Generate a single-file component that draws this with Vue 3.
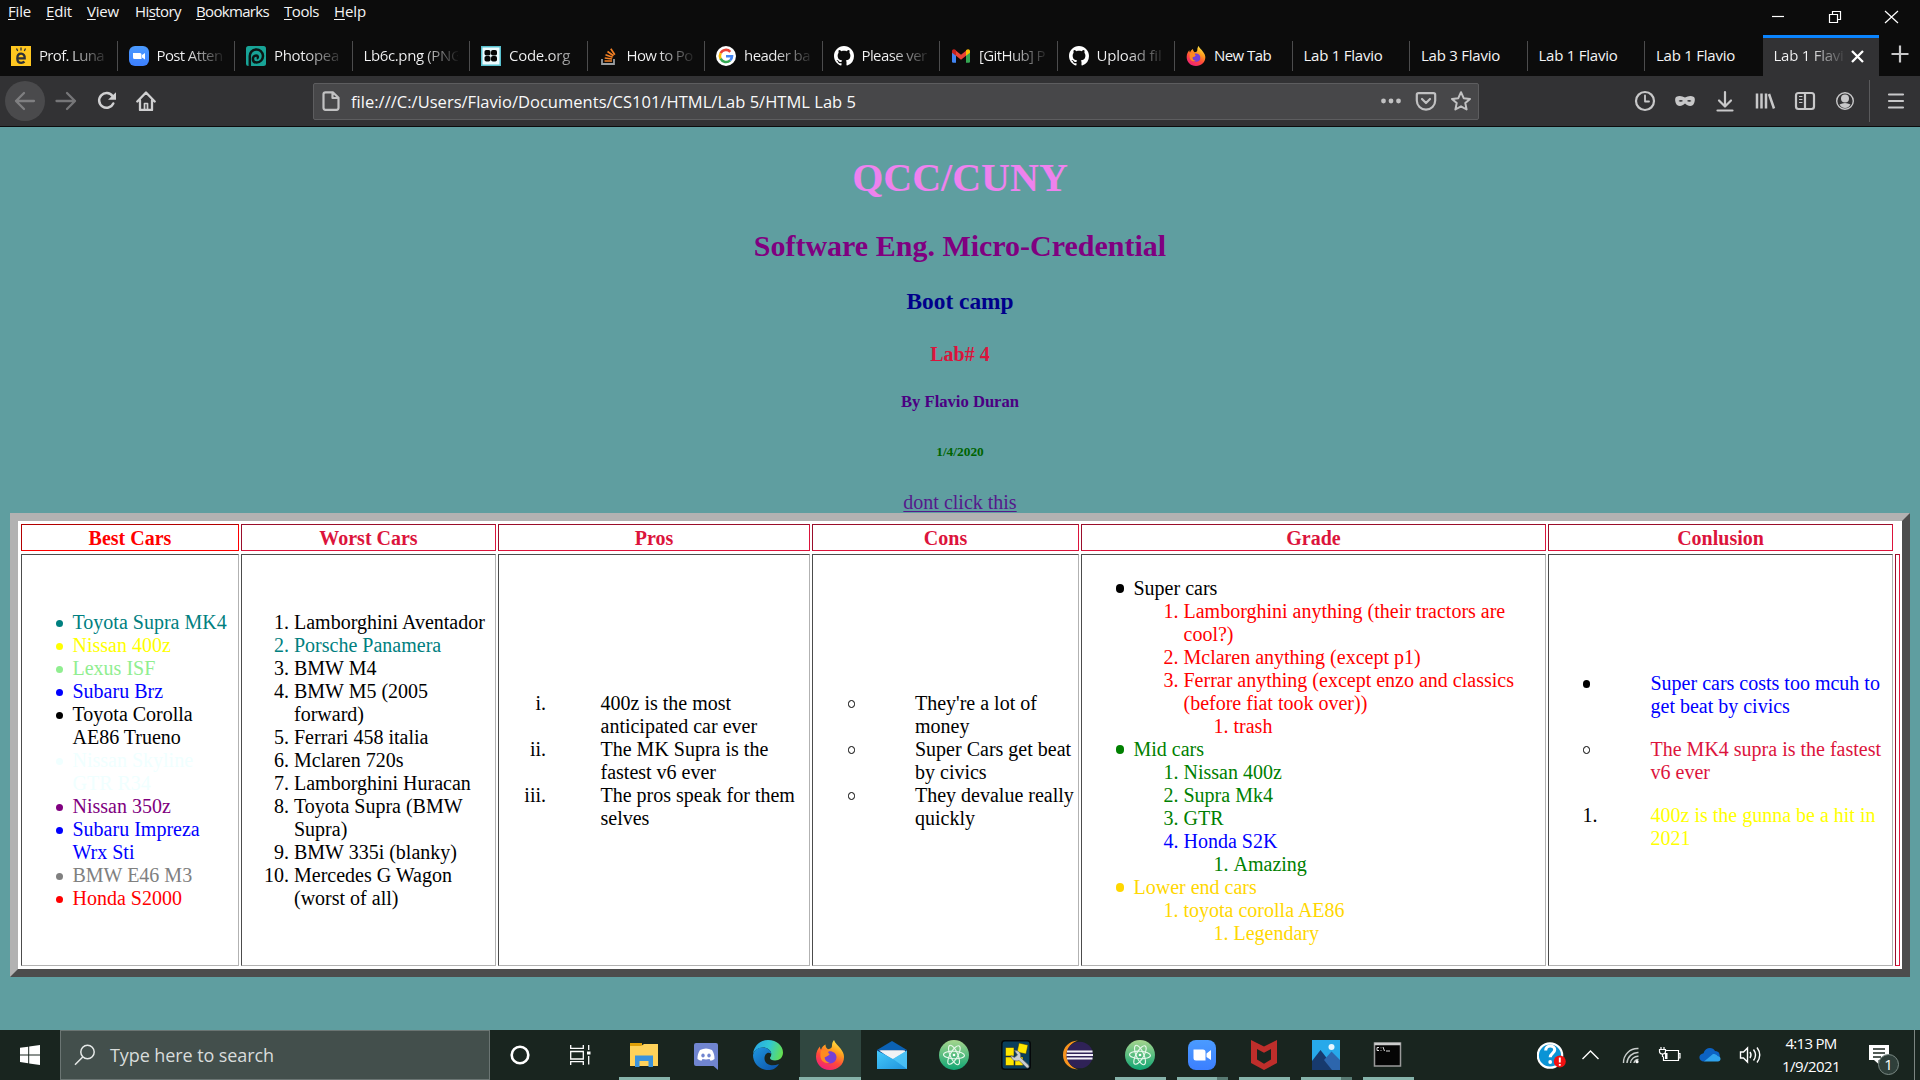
<script setup>
// Tightens or widens the tracking so a label takes exactly the given width.
const vFit = {
  mounted(el, { value }) {
    if (!value) return
    const natural = el.getBoundingClientRect().width
    const count = el.textContent.trim().length
    el.style.letterSpacing = (value - natural) / count + 'px'
  }
}

const menus = [
  ['F', 'ile', 23, '', 38], ['E', 'dit', 26, '', 41], ['V', 'iew', 32, '', 48],
  ['s', 'tory', 46, 'Hi', 61], ['B', 'ookmarks', 73, '', 88], ['T', 'ools', 35, '', 50], ['H', 'elp', 32, '', 40]
]

const tabs = [
  { icon: 'engrade', text: 'Prof. Luna', w: 65 },
  { icon: 'zoom', text: 'Post Atten', w: 66 },
  { icon: 'photopea', text: 'Photopea', w: 65 },
  { text: 'Lb6c.png (PNG', w: 98, wide: true },
  { icon: 'code', text: 'Code.org', w: 61, soft: true },
  { icon: 'stack', text: 'How to Po', w: 66 },
  { icon: 'google', text: 'header ba', w: 66 },
  { icon: 'github', text: 'Please ver', w: 65 },
  { icon: 'gmail', text: '[GitHub] P', w: 66 },
  { icon: 'github', text: 'Upload fil', w: 65 },
  { icon: 'firefox', text: 'New Tab', w: 57, whole: true },
  { text: 'Lab 1 Flavio', w: 79, whole: true },
  { text: 'Lab 3 Flavio', w: 79, whole: true },
  { text: 'Lab 1 Flavio', w: 79, whole: true },
  { text: 'Lab 1 Flavio', w: 79, whole: true },
  { text: 'Lab 1 Flavi', w: 70, active: true }
]

const columns = [
  {
    title: 'Best Cars', head: 'red', kind: 'best', rows: [
      ['disc', 'Toyota Supra MK4', 'teal'],
      ['disc', 'Nissan 400z', 'yellow'],
      ['disc', 'Lexus ISF', 'lightgreen'],
      ['disc', 'Subaru Brz', 'blue'],
      ['disc', 'Toyota Corolla\nAE86 Trueno', 'black'],
      ['disc', 'Nissan Skyline\nGTR R34', 'azure'],
      ['disc', 'Nissan 350z', 'purple'],
      ['disc', 'Subaru Impreza\nWrx Sti', 'blue'],
      ['disc', 'BMW E46 M3', 'gray'],
      ['disc', 'Honda S2000', 'red']
    ]
  },
  {
    title: 'Worst Cars', kind: 'worst', rows: [
      ['1.', 'Lamborghini Aventador'],
      ['2.', 'Porsche Panamera', 'teal'],
      ['3.', 'BMW M4'],
      ['4.', 'BMW M5 (2005\nforward)'],
      ['5.', 'Ferrari 458 italia'],
      ['6.', 'Mclaren 720s'],
      ['7.', 'Lamborghini Huracan'],
      ['8.', 'Toyota Supra (BMW\nSupra)'],
      ['9.', 'BMW 335i (blanky)'],
      ['10.', 'Mercedes G Wagon\n(worst of all)']
    ]
  },
  {
    title: 'Pros', kind: 'pros', rows: [
      ['i.', '400z is the most\nanticipated car ever'],
      ['ii.', 'The MK Supra is the\nfastest v6 ever'],
      ['iii.', 'The pros speak for them\nselves']
    ]
  },
  {
    title: 'Cons', kind: 'cons', rows: [
      ['circle', "They're a lot of\nmoney"],
      ['circle', 'Super Cars get beat\nby civics'],
      ['circle', 'They devalue really\nquickly']
    ]
  },
  {
    title: 'Grade', kind: 'grade', rows: [
      ['disc', 'Super cars', 'black', 0],
      ['1.', 'Lamborghini anything (their tractors are\ncool?)', 'red', 1],
      ['2.', 'Mclaren anything (except p1)', 'red', 1],
      ['3.', 'Ferrar anything (except enzo and classics\n(before fiat took over))', 'red', 1],
      ['1.', 'trash', 'red', 2],
      ['disc', 'Mid cars', 'green', 0],
      ['1.', 'Nissan 400z', 'green', 1],
      ['2.', 'Supra Mk4', 'green', 1],
      ['3.', 'GTR', 'green', 1],
      ['4.', 'Honda S2K', 'blue', 1],
      ['1.', 'Amazing', 'green', 2],
      ['disc', 'Lower end cars', 'gold', 0],
      ['1.', 'toyota corolla AE86', 'gold', 1],
      ['1.', 'Legendary', 'gold', 2]
    ]
  },
  {
    title: 'Conlusion', kind: 'end', rows: [
      ['disc', 'Super cars costs too mcuh to\nget beat by civics', 'blue'],
      ['circle', 'The MK4 supra is the fastest\nv6 ever', 'crimson'],
      ['1.', '400z is the gunna be a hit in\n2021', 'yellow']
    ]
  }
]

const apps = [
  { icon: 'explorer', open: true }, { icon: 'discord' }, { icon: 'edge' },
  { icon: 'firefox', open: true, active: true }, { icon: 'mail' }, { icon: 'atom' },
  { icon: 'tool' }, { icon: 'eclipse' }, { icon: 'atom', open: true },
  { icon: 'zoomapp', open: true, stacked: true }, { icon: 'mcafee', open: true },
  { icon: 'photos', open: true, stacked: true }, { icon: 'cmd', open: true }
]
</script>

<template>
  <div class="screen">
    <svg class="defs" width="0" height="0">
      <defs>
        <linearGradient id="ffBody" x1=".8" y1="0" x2=".3" y2="1">
          <stop offset="0" stop-color="#fff04a" /><stop offset=".35" stop-color="#ffa01f" />
          <stop offset=".65" stop-color="#ff4a3a" /><stop offset="1" stop-color="#f0207a" />
        </linearGradient>
        <linearGradient id="edgeTop" x1="0" y1=".4" x2="1" y2=".6">
          <stop offset="0" stop-color="#27a7e5" /><stop offset=".5" stop-color="#31c8d2" /><stop offset="1" stop-color="#66e04d" />
        </linearGradient>
        <linearGradient id="edgeLow" x1="0" y1="0" x2="1" y2="1">
          <stop offset="0" stop-color="#1f96e0" /><stop offset="1" stop-color="#0b4fa5" />
        </linearGradient>
        <linearGradient id="atomBg" x1="0" y1="0" x2="0" y2="1">
          <stop offset="0" stop-color="#a6d68e" /><stop offset="1" stop-color="#0fa573" />
        </linearGradient>
        <linearGradient id="mailBg" x1="0" y1="0" x2="1" y2="1">
          <stop offset="0" stop-color="#45cafb" /><stop offset="1" stop-color="#2093dc" />
        </linearGradient>
        <linearGradient id="zoomBg" x1="0" y1="0" x2="0" y2="1">
          <stop offset="0" stop-color="#4b9bff" /><stop offset="1" stop-color="#3c7fff" />
        </linearGradient>

        <symbol id="i-engrade" viewBox="0 0 20 20">
          <rect width="20" height="20" fill="#ffc720" />
          <path d="M6.500 12.300h7.200c.2-2.800-1.200-4.600-3.600-4.600S6.300 9.600 6.300 12.400s1.500 4.400 4 4.400c1.300 0 2.400-.4 3.200-1.100" fill="none" stroke="#2d3038" stroke-width="2.300" />
          <path d="M5.500 2.500l1.200 2.500M10 1.500v3M14.500 2.500l-1.200 2.500" stroke="#2d3038" stroke-width="1.300" />
        </symbol>
        <symbol id="i-zoom" viewBox="0 0 20 20">
          <rect width="20" height="20" rx="6" fill="url(#zoomBg)" />
          <path d="M4 7h7q1.500 0 1.500 1.500V13H5.500Q4 13 4 11.500zM13 9l3-2v6.500l-3-2z" fill="#fff" />
        </symbol>
        <symbol id="i-photopea" viewBox="0 0 20 20">
          <rect width="20" height="20" rx="2.500" fill="#18a497" />
          <path d="M3.800 20V10.500a6.600 6.600 0 1 1 6.800 6.100c-5 0-4.700-7.200-.4-7.200 2 0 2.200 2.700.5 2.900" fill="none" stroke="#0b1514" stroke-width="2.500" />
        </symbol>
        <symbol id="i-code" viewBox="0 0 20 20">
          <rect width="20" height="20" fill="#58c1cf" /><rect x="1.500" y="1.500" width="17" height="17" fill="#eefcff" />
          <g fill="#050505"><rect x="3.500" y="4" width="6" height="5.500" rx="1.800" /><rect x="10" y="4" width="6" height="5.500" rx="1.800" /><rect x="3.500" y="10" width="6" height="5.500" rx="1.800" /><rect x="10" y="10" width="6" height="5.500" rx="1.800" /></g>
        </symbol>
        <symbol id="i-stack" viewBox="0 0 20 20">
          <path d="M3 13v5h12v-5" fill="none" stroke="#9a9da0" stroke-width="1.800" />
          <path d="M5.500 15h7.500M5.700 12l7.400 1M6.500 8.700l7.100 2.500M8.500 5.500l6 4.200M11.800 2.800l4 6" fill="none" stroke="#f48024" stroke-width="1.700" />
        </symbol>
        <symbol id="i-google" viewBox="0 0 20 20">
          <circle cx="10" cy="10" r="10" fill="#fff" />
          <g fill="none" stroke-width="2.600">
            <path d="M4.600 7.200A6 6 0 0 1 14.300 5.800" stroke="#ea4335" />
            <path d="M4.600 12.800a6 6 0 0 1 0-5.600" stroke="#fbbc05" />
            <path d="M14.200 14.300A6 6 0 0 1 4.600 12.700" stroke="#34a853" />
            <path d="M10 10.200h6a6 6 0 0 1-1.900 4.200" stroke="#4285f4" />
          </g>
        </symbol>
        <symbol id="i-github" viewBox="0 0 16 16">
          <path fill="#fff" d="M8 0C3.580 0 0 3.580 0 8c0 3.540 2.290 6.530 5.470 7.590.4.070.55-.17.55-.38 0-.19-.01-.82-.01-1.490-2.010.37-2.530-.49-2.690-.94-.09-.23-.48-.94-.82-1.130-.28-.15-.68-.52-.01-.53.63-.01 1.080.58 1.230.82.72 1.210 1.870.87 2.330.66.070-.52.28-.87.51-1.070-1.780-.2-3.640-.89-3.640-3.950 0-.87.31-1.590.82-2.150-.08-.2-.36-1.020.08-2.120 0 0 .67-.21 2.200.82.64-.18 1.320-.27 2-.27s1.360.09 2 .27c1.530-1.040 2.200-.82 2.200-.82.44 1.100.16 1.920.08 2.120.51.56.82 1.270.82 2.150 0 3.070-1.870 3.750-3.650 3.950.29.25.54.73.54 1.480 0 1.070-.01 1.930-.01 2.200 0 .21.15.46.55.38A8.010 8.010 0 0 0 16 8c0-4.420-3.580-8-8-8z" />
        </symbol>
        <symbol id="i-gmail" viewBox="0 0 20 20">
          <path d="M1 5v10.500q0 1.200 1.200 1.200H5V8.500z" fill="#4285f4" /><path d="M19 5v10.500q0 1.200-1.200 1.200H15V8.500z" fill="#34a853" />
          <path d="M5 4.800l5 4 5-4v5l-5 4-5-4z" fill="#ea4335" /><path d="M1 5.200C1 3 3.300 2.500 5 4.200v5.500L1 6.700z" fill="#c5221f" /><path d="M19 5.200c0-2.200-2.300-2.700-4-1v5.500l4-3z" fill="#fbbc04" />
        </symbol>
        <symbol id="i-firefox" viewBox="0 0 30 30">
          <path d="M15 30C6.500 30 1 23.700 1 16.500 1 12 3 8.500 5 6.500c0 1.500.3 2.500 1 3.200C7 7 9 5 10.500 4.500c0 2 .7 3.500 2.500 4.700C16 9 17 7.500 17 5.500c0-2.200.7-4 2-5.500 1 3.500 4 5 6.500 8.500 2.300 3 3.500 5.500 3.500 8.500C29 24.500 23 30 15 30z" fill="url(#ffBody)" />
          <path d="M13.500 11.500c3.500-.8 8 1.500 8 6a6.300 6.300 0 0 1-6.500 6c-4 0-7-3-6.700-7 2 .8 4.500-.3 6.200-2.300-1.200-.6-1.700-1.400-1-2.700z" fill="#7540d8" />
          <path d="M6 10.500c2.500-.8 5-.2 7.500 1-1 1-.5 2 1.200 2.500-1.500 2-3.500 2.500-5 3.300 0 3 2.300 5 5.300 5-4.500 2-9-1-9.500-5.500-.2-2 0-4.500.5-6.300z" fill="#ff8b20" />
        </symbol>

        <symbol id="i-explorer" viewBox="0 0 30 30">
          <path d="M1 3h12v5H1z" fill="#e0a007" /><path d="M1 6h11l3-2h14v22H1z" fill="#ffd25a" />
          <path d="M6 27V15.500h18V27h-4.500v-6h-9v6z" fill="#3b93dc" />
        </symbol>
        <symbol id="i-discord" viewBox="0 0 30 30">
          <path d="M5 3h20q2 0 2 2v25l-4.500-4H5q-2 0-2-2V5q0-2 2-2z" fill="#7085d0" />
          <path d="M9 10c4-2 8-2 12 0 2 3 2.600 6 2.500 9-1.300 1-2.700 1.500-4 1.700l-1-1.700c-2.300.6-4.700.6-7 0l-1 1.700c-1.300-.2-2.700-.7-4-1.700C6.400 16 7 13 9 10z" fill="#fff" />
          <ellipse cx="12" cy="15.500" rx="1.700" ry="1.900" fill="#7085d0" /><ellipse cx="18" cy="15.500" rx="1.700" ry="1.900" fill="#7085d0" />
        </symbol>
        <symbol id="i-edge" viewBox="0 0 30 30">
          <path d="M0 14C1 5 8 0 15 0c9 0 15 6 15 12.500 0 5-3.500 8-8 8-3 0-5-1-5-2.500 0-1 1.300-1.300 1.300-4C18.300 10 14 7.500 10 7.500 5 7.500 1.500 10.500 0 14z" fill="url(#edgeTop)" />
          <path d="M0 15c1-4.500 4.500-7.500 10-7.500 4.500 0 8.300 3 8.300 6.500-3-3-6.800-.5-6.800 4.500 0 6 7 8.500 14.500 5.500C23 29 19 30 15.500 30 6 30 0 23 0 15z" fill="url(#edgeLow)" />
        </symbol>
        <symbol id="i-mail" viewBox="0 0 30 30">
          <path d="M0 10L15 1l15 9v6H0z" fill="#0b62b5" /><path d="M0 10h30v3H0z" fill="#0a3f80" />
          <path d="M2 10.500h26v3L16 20z" fill="#f1f3f5" />
          <path d="M0 10.500L16 19l14-8.500V29H0z" fill="url(#mailBg)" /><path d="M16 19l14-8.500V29z" fill="#5bd0fc" opacity=".65" />
          <path d="M3 10.500h24L16 18z" fill="#f1f3f5" />
        </symbol>
        <symbol id="i-atom" viewBox="0 0 30 30">
          <circle cx="15" cy="15" r="15" fill="url(#atomBg)" />
          <g fill="none" stroke="#e8f8ec" stroke-width="1.100"><ellipse cx="15" cy="15" rx="3.800" ry="10.500" transform="rotate(-24 15 15)" /><ellipse cx="15" cy="15" rx="3.800" ry="10.500" transform="rotate(30 15 15)" /><ellipse cx="15" cy="15" rx="3.800" ry="10.500" transform="rotate(93 15 15)" /></g>
          <circle cx="15" cy="15" r="1.300" fill="#fff" />
        </symbol>
        <symbol id="i-tool" viewBox="0 0 30 30">
          <rect x=".8" y=".8" width="28.400" height="28.400" rx="3" fill="#0a3f5c" stroke="#05080a" stroke-width="1.600" />
          <path d="M4.500 7.500h8.500v8.500H4.500zM4.500 17h8.500v8.500H4.500zM14 17h8v8.500h-8zM18 3l9 2-2 9-9-2z" fill="#ffe600" stroke="#222" stroke-width=".5" />
          <path d="M13.500 10.500c4-.5 7 3 6 7l8 7.500q1.500 3-1.500 3l-8-7.500c-4 1.500-8-1-8-5l3.500 2 3-2.500z" fill="#c9cdd0" stroke="#666" stroke-width=".7" />
        </symbol>
        <symbol id="i-eclipse" viewBox="0 0 30 30">
          <path d="M15 .5C6 1 0 7 0 15s6 14 15 14.500C8 27 4 22 4 15S8 3 15 .5z" fill="#f7941e" />
          <circle cx="16.700" cy="15" r="13.300" fill="#2f2257" />
          <path d="M4 11.500h25.500M3.500 15h26.500M4 18.500h25.500" stroke="#f3f1f8" stroke-width="1.800" />
        </symbol>
        <symbol id="i-zoomapp" viewBox="0 0 30 30">
          <rect x="1" width="28" height="30" rx="8" fill="url(#zoomBg)" />
          <path d="M6.500 9.500H16q2.500 0 2.500 2.500v8.500H9q-2.500 0-2.500-2.500zM19.500 13.500l4.500-3.500v10l-4.500-3z" fill="#fff" />
        </symbol>
        <symbol id="i-mcafee" viewBox="0 0 30 30">
          <path d="M2 0l13 6.500L28 0v23L15 30 2 23zM8 9v10.500l7 4.200 7-4.200V9l-7 3.800z" fill="#bf2e2b" fill-rule="evenodd" />
        </symbol>
        <symbol id="i-photos" viewBox="0 0 30 30">
          <rect x="1" width="28" height="30" fill="#27a9ea" /><path d="M1 21L9.500 10 25 30H1z" fill="#173a6e" />
          <path d="M13 20l7.500-8.500L29 20v10H21z" fill="#2d66ad" /><circle cx="20.500" cy="7" r="3" fill="#e8f7ff" />
        </symbol>
        <symbol id="i-cmd" viewBox="0 0 30 30">
          <rect x="1.500" y="3" width="26" height="23" fill="#050505" stroke="#9a9a9a" stroke-width="1.500" />
          <path d="M1.500 4h26" stroke="#ccc" stroke-width="2.500" /><path d="M4 7.500h2M4 7.500v3h2M8 7.500v.8M8 10v.8M10 7l1.500 4M13 11h4" stroke="#ddd" stroke-width="1" fill="none" />
        </symbol>
      </defs>
    </svg>

    <header class="chrome">
      <div class="titlebar">
        <nav class="menus">
          <div v-for="m in menus" :key="m[1]" class="menu" :style="{ width: m[4] + 'px' }">
            <span v-fit="m[2]">{{ m[3] }}<u>{{ m[0] }}</u>{{ m[1] }}</span>
          </div>
        </nav>
        <svg class="wincontrols" width="148" height="34" fill="none" stroke="#fff" stroke-width="1.200">
          <path d="M0 16.500h12" /><path d="M57.500 14.500h8v8h-8zM60.500 14v-2.500h8v8H66" /><path d="M113 11l13 12M126 11l-13 12" />
        </svg>
      </div>
      <div class="tabstrip">
        <div v-for="(t, i) in tabs" :key="i" class="tab" :class="{ active: t.active, last: i === 14 }">
          <svg v-if="t.icon" class="fav" width="20" height="20"><use :href="'#i-' + t.icon" /></svg>
          <div class="label" :class="{ whole: t.whole, wide: t.wide, soft: t.soft }"><span v-fit="t.w">{{ t.text }}</span></div>
          <svg v-if="t.active" class="x" width="13" height="13" stroke="#fff" stroke-width="2.300"><path d="M1 1l11 11M12 1L1 12" /></svg>
        </div>
        <svg class="plus" width="18" height="18" stroke="#c8c8c9" stroke-width="2.200"><path d="M9 .5v17M.5 9h17" /></svg>
      </div>
      <div class="toolbar">
        <div class="nav">
          <div class="back"><svg width="22" height="20" fill="none" stroke="#7f7f81" stroke-width="2.300" stroke-linecap="round" stroke-linejoin="round"><path d="M20 10H2M10 2l-8 8 8 8" /></svg></div>
          <svg class="fwd" width="22" height="20" fill="none" stroke="#767678" stroke-width="2.300" stroke-linecap="round" stroke-linejoin="round"><path d="M1.500 10H20M12 2l8 8-8 8" /></svg>
          <svg class="reload" width="20" height="20" viewBox="0 0 20 20"><path d="M16.300 12.500A7.400 7.400 0 1 1 15.500 5" fill="none" stroke="#d0d0d1" stroke-width="2.500" stroke-linecap="round" /><path d="M19 1.200V8.700h-8z" fill="#d0d0d1" /></svg>
          <svg class="home" width="20" height="20" viewBox="0 0 20 20" fill="none" stroke="#d0d0d1" stroke-width="2.300" stroke-linejoin="round" stroke-linecap="round"><path d="M1.300 10.500L10 1.500l8.700 9M4 9.500V19h12V9.500" /><path d="M8.500 18.500v-6h3v6" stroke-width="1.700" /></svg>
        </div>
        <div class="urlbar">
          <svg width="18" height="20" viewBox="0 0 18 20" fill="none" stroke="#c1c1c2" stroke-width="2.200" stroke-linejoin="round"><path d="M3.500 1.300h7.300l5.700 5.500v10q0 2-2 2h-11q-2 0-2-2V3.300q0-2 2-2zM10.500 1.500V7h5.700" /></svg>
          <div class="url"><span v-fit="505">file:///C:/Users/Flavio/Documents/CS101/HTML/Lab 5/HTML Lab 5</span></div>
          <svg width="90" height="20" viewBox="0 0 90 20" fill="none" stroke="#c1c1c2" stroke-width="2.200" stroke-linejoin="round" stroke-linecap="round">
            <g fill="#c1c1c2" stroke="none"><circle cx="2.500" cy="10" r="2.400" /><circle cx="10" cy="10" r="2.400" /><circle cx="17.500" cy="10" r="2.400" /></g>
            <path d="M37.500 2.200h15q1.700 0 1.700 1.700v5.600a9.200 9.200 0 0 1-18.400 0V3.900q0-1.700 1.700-1.700zM41 8l4 4 4-4" />
            <path d="M80 1.200l2.700 6 6.300.7-4.700 4.200 1.300 6.400L80 15.300 74.400 18.500l1.300-6.400L71 7.900l6.300-.7z" stroke-width="2" />
          </svg>
        </div>
        <svg class="tools" width="281" height="42" viewBox="0 0 281 42" fill="none" stroke="#c8c8c9" stroke-width="2.200" stroke-linecap="round" stroke-linejoin="round">
          <circle cx="11" cy="21" r="9" /><path d="M11 15.500V21.500h4" stroke-width="1.800" />
          <path d="M42 17c3-1.500 6-1 9 .5 3-1.500 6-2 9-.5 1.400 1.500 1 5.500-1 8-2.500 1.800-5.500 1-8-1.500-2.500 2.500-5.500 3.300-8 1.500-2-2.500-2.400-6.500-1-8z" fill="#c8c8c9" stroke="none" /><path d="M44.500 21c1.500-1.500 3.500-1.400 4.500 0-1.200 1-3.200 1-4.500 0zM53 21c1-1.400 3-1.500 4.500 0-1.300 1-3.300 1-4.500 0z" fill="#323234" stroke="none" />
          <path d="M91 12v14M85 20.500l6 6 6-6M83.500 30.500h15" />
          <path d="M123 13.500v15M127.500 13.500v15M132 13.500v15M135 14l5 14.500" stroke-linecap="butt" stroke-width="2.500" />
          <rect x="162" y="13" width="18" height="16" rx="2.500" /><path d="M171 13v16" /><path d="M165.500 16.500h2.500M165.500 19.500h2.500M165.500 22.500h2.500" stroke-width="1.200" />
          <circle cx="211" cy="21" r="8.300" stroke-width="1.400" /><circle cx="211" cy="18.500" r="4" fill="#c8c8c9" stroke="none" /><path d="M205.500 24.500q5.500-3 11 0-2 3.500-5.500 3.500t-5.500-3.500z" fill="#c8c8c9" stroke="none" />
          <path d="M235.500 0v42" stroke="#5a5a5c" stroke-width="1" />
          <path d="M255 14.500h14M255 21h14M255 27.500h14" />
        </svg>
      </div>
    </header>

    <main class="page">
      <h1>QCC/CUNY</h1>
      <h2>Software Eng. Micro-Credential</h2>
      <h3>Boot camp</h3>
      <h4>Lab# 4</h4>
      <h5>By Flavio Duran</h5>
      <h6>1/4/2020</h6>
      <div class="linkrow"><a>dont click this</a></div>
      <section class="table">
        <div v-for="c in columns" :key="c.title" class="th" :class="c.head">{{ c.title }}</div>
        <div></div>
        <div v-for="c in columns" :key="c.kind" class="td" :class="c.kind">
          <div v-for="(r, i) in c.rows" :key="i" class="row" :class="'lv' + (r[3] || 0)" :style="{ color: r[2] || 'black' }">
            <span class="mk"><i v-if="r[0] === 'disc' || r[0] === 'circle'" :class="r[0]"></i><template v-else>{{ r[0] }}</template></span>
            <span class="tx">{{ r[1] }}</span>
          </div>
        </div>
        <div class="th sliver"></div>
      </section>
    </main>

    <footer class="taskbar">
      <div class="start"><svg width="20" height="20" viewBox="0 0 20 20" fill="#fff"><path d="M0 2.800l8.200-1.100v7.700H0zM9.200 1.500L20 0v9.400H9.200zM0 10.400h8.200v7.800L0 17.100zM9.200 10.400H20V20L9.200 18.400z" /></svg></div>
      <div class="search">
        <svg width="22" height="22" viewBox="0 0 22 22" fill="none" stroke="#e6e9e8" stroke-width="1.500"><circle cx="13.500" cy="8" r="6.700" /><path d="M8.700 13L1 20.700" /></svg>
        <span v-fit="164">Type here to search</span>
      </div>
      <div class="pin"><svg width="20" height="20"><circle cx="10" cy="10" r="8.300" fill="none" stroke="#fff" stroke-width="2.600" /></svg></div>
      <div class="pin view"><svg width="21" height="20" fill="none" stroke="#fff" stroke-width="1.300"><path d="M.7 0v3.300h12.600V0M.7 6.500h12.600v7.500H.7zM.7 20v-3.300h12.600V20M18.700 0v5M18.700 11v8.500" /><path d="M17 6.500h3.500v3H17z" fill="#fff" stroke="none" /></svg></div>
      <div v-for="(a, i) in apps" :key="i" class="app" :class="{ active: a.active }">
        <svg width="30" height="30"><use :href="'#i-' + a.icon" /></svg>
        <div v-if="a.open" class="bar" :class="{ stacked: a.stacked }"></div>
      </div>
      <div class="tray">
        <svg width="230" height="50" viewBox="0 0 230 50" fill="none" stroke="#fff" stroke-width="1.400">
          <circle cx="13" cy="25.500" r="12.200" fill="#0a94d6" stroke-width="2.200" /><path d="M8.700 20.500c0-6.200 9-5.700 9-.8 0 3.500-4.500 3.800-4.500 7.500" stroke-width="3.100" /><circle cx="13.200" cy="32" r="1.900" fill="#fff" stroke="none" />
          <circle cx="22.800" cy="31.500" r="6" fill="#f01010" stroke="none" /><path d="M22.800 27.500v5M22.800 34v1.800" stroke-width="1.900" />
          <path d="M45.500 29l8-8 8 8" />
          <g stroke="#c9cecc"><path d="M86.500 33A14 14 0 0 1 101.500 18.500M90 33a11 11 0 0 1 11.500-10.500M93.500 33a7.500 7.500 0 0 1 8-6.700M97 33a4 4 0 0 1 4.500-3.500" /></g><circle cx="100" cy="31.700" r="1.600" fill="#fff" stroke="none" />
          <path d="M128 20.500h13.500v10H126.500v-4M141.500 23.500h1.500v4.500h-1.500M122.500 19.500h6v2q0 2.500-3 2.500t-3-2.500zM124 19.500v-2.500M127 19.500v-2.500M125.500 24v3" stroke-width="1.200" /><path d="M128 23h2.500v6H128z" fill="#fff" stroke="none" />
          <path d="M167 31.500c-5.500 0-6.500-7-.5-8.200C168 17 176 16.500 178 21c4.500 0 5 4 4.700 6z" fill="#0c62c4" stroke="none" /><path d="M167 31.500l9-7.500c2 0 3.500.6 4.500 2 4.500.5 3.500 5.500.5 5.500z" fill="#2fa3ee" stroke="none" />
          <path d="M203.500 22h3l4-4v14l-4-4h-3zM213 22q2 3 0 6M216.500 19.500q4 5.500 0 11M220 17.500q5.500 7.500 0 15" />
        </svg>
      </div>
      <div class="clock"><span v-fit="51">4:13 PM</span><span v-fit="58">1/9/2021</span></div>
      <div class="note">
        <svg width="20" height="19"><path d="M0 0h20v15H9.500v4L5 15H0z" fill="#fff" /><path d="M4 4h12M4 8h12M4 12h8" stroke="#1a261f" stroke-width="1.300" /></svg>
        <span class="badge">1</span>
      </div>
      <div class="peek"></div>
    </footer>
  </div>
</template>

<style>
html, body { margin: 0; background: #5f9ea0; }
</style>

<style scoped>
.screen { width: 1920px; height: 1080px; display: flex; flex-direction: column; overflow: hidden; background: #5f9ea0; font-family: "Open Sans", "Noto Sans", sans-serif; }
.defs { position: absolute; }
.chrome { height: 127px; flex: none; background: #0c0c0c; color: #f4f4f5; box-sizing: border-box; border-bottom: 1px solid #0c0c0d; }
.titlebar { height: 35px; display: flex; justify-content: space-between; }
.menus { display: flex; padding-left: 8px; height: 22px; align-items: center; font-size: 15px; line-height: 22px; white-space: nowrap; }
.menu { flex: none; }
.menu u { text-underline-offset: 2px; text-decoration-thickness: 1px; }
.wincontrols { flex: none; }
.tabstrip { height: 41px; display: flex; align-items: stretch; }
.tab { width: 117.500px; flex: none; box-sizing: border-box; display: flex; align-items: center; padding: 0 12px 0 11px; border-top: 3px solid transparent; background: linear-gradient(#4c4c4d, #4c4c4d) right 3px / 1px 30px no-repeat; }
.tab.last { background: none; }
.tab.active { background: #323234; border-top-color: #0a84ff; width: 116.500px; }
.fav { flex: none; margin: 0 8px 2px 0; }
.label { flex: 1; min-width: 0; white-space: nowrap; font-size: 15px; line-height: 24px; margin-bottom: 4px; color: transparent; background: linear-gradient(90deg, #f4f4f5 44%, #0c0c0c 106%); -webkit-background-clip: text; background-clip: text; }
.label.wide { background-image: linear-gradient(90deg, #f4f4f5 62%, #0c0c0c 102%); }
.label.soft { background-image: linear-gradient(90deg, #f4f4f5 60%, #0c0c0c 130%); }
.label.whole { color: #f4f4f5; background: none; }
.active .label { background-image: linear-gradient(90deg, #f4f4f5 52%, #323234 106%); }
.x { flex: none; margin: 0 3px 2px 8px; }
.plus { margin: 10px 0 0 11.500px; }
.toolbar { height: 50px; background: #323234; display: flex; align-items: center; }
.nav { width: 313px; display: flex; align-items: center; flex: none; }
.back { width: 40px; height: 40px; border-radius: 50%; background: #4a4a4c; margin-left: 5px; display: flex; align-items: center; justify-content: center; }
.fwd { margin-left: 10px; }
.reload { margin-left: 20px; }
.home { margin-left: 19px; }
.urlbar { width: 1166px; height: 37px; box-sizing: border-box; border: 1px solid #5d5d5f; border-radius: 2px; background: #474749; display: flex; align-items: center; padding: 0 7px 0 8px; flex: none; }
.url { flex: 1; font-size: 16.500px; line-height: 24px; padding: 2px 0 0 11px; white-space: nowrap; color: #f9f9fa; }
.tools { margin-left: 155px; flex: none; }

.page { flex: 1; font-family: "Liberation Serif", "Times New Roman", serif; text-align: center; font-size: 20px; line-height: 23px; padding: 28px 10px 0; }
h1, h2, h3, h4, h5, h6 { margin: 0; font-weight: bold; }
h1 { font-size: 40px; line-height: 46px; color: violet; margin-bottom: 28px; }
h2 { font-size: 30px; line-height: 34px; color: purple; margin-bottom: 25px; }
h3 { font-size: 23.400px; line-height: 27px; color: darkblue; margin-bottom: 28px; }
h4 { font-size: 20px; line-height: 23px; color: crimson; margin-bottom: 26px; }
h5 { font-size: 16.600px; line-height: 19px; color: indigo; margin-bottom: 33px; }
h6 { font-size: 13.400px; line-height: 15px; color: darkgreen; margin-bottom: 32px; }
.linkrow { height: 22px; }
.linkrow a { color: #551a8b; text-decoration: underline; text-decoration-thickness: 1px; text-underline-offset: 2px; }
.table { box-sizing: border-box; width: 1900px; height: 464px; border: 8px solid; border-color: #b2b2b2 #4c4c4c #4c4c4c #b2b2b2; background: #fff; padding: 3px 2px 3px 3px; display: grid; grid-template-columns: 218px 255px 312px 267px 465px 345px 5px; grid-template-rows: 27px 412px; gap: 3px 2px; }
.th { border: 1px solid; border-color: #9a0e2b #dc143c #dc143c #9a0e2b; color: crimson; font-weight: bold; line-height: 27px; }
.th.red { color: red; border-color: #b20000 red red #b20000; }
.td { border: 1px solid; border-color: #4c4c4c #b2b2b2 #b2b2b2 #4c4c4c; display: flex; flex-direction: column; justify-content: center; text-align: left; white-space: pre; padding-top: 1px; }
.row { display: flex; }
.mk { flex: none; box-sizing: border-box; text-align: right; height: 23px; }
.disc, .circle { display: inline-block; width: 7.500px; height: 7.500px; border-radius: 50%; background: currentColor; vertical-align: 2px; box-sizing: border-box; }
.circle { background: none; border: 1px solid #000; }
.best .mk { width: 50.500px; padding-right: 9.500px; }
.worst .mk { width: 52px; padding-right: 5px; }
.pros .mk { width: 101.500px; padding-right: 54.500px; }
.cons .mk { width: 102px; padding-right: 60px; }
.grade .lv0 .mk { width: 51.500px; padding-right: 9.500px; }
.grade .lv0 .disc { width: 8.500px; height: 8.500px; }
.grade .lv1 .mk { width: 101.500px; padding-right: 5px; }
.grade .lv2 .mk { width: 151.500px; padding-right: 5px; }
.end { gap: 20px; }
.end .mk { width: 101.500px; padding-left: 33.500px; text-align: left; color: #000; }

.taskbar { height: 50px; flex: none; background: #19251f; display: flex; align-items: stretch; color: #fff; white-space: nowrap; }
.start { width: 60px; display: flex; align-items: center; justify-content: center; }
.search { width: 430px; box-sizing: border-box; background: #434f4c; border: 1px solid #6b7573; display: flex; align-items: center; padding-left: 13px; font-size: 18px; color: #d8dcdb; gap: 14px; }
.pin { width: 60px; display: flex; align-items: center; justify-content: center; }
.view { width: 63px; box-sizing: border-box; padding-right: 2px; }
.app { width: 62px; position: relative; display: flex; align-items: center; justify-content: center; flex: none; }
.app.active { background: linear-gradient(#304740, #304740) center / 61px 100% no-repeat; }
.bar { position: absolute; left: 6px; right: 5px; bottom: 0; height: 3px; background: #86b3aa; }
.active .bar { left: 0; right: 0; }
.stacked { background: linear-gradient(90deg, #86b3aa 40px, #587a72 40px); }
.tray { margin-left: 118px; width: 230px; display: flex; }
.clock { width: 84px; display: flex; flex-direction: column; align-items: center; font-size: 15px; line-height: 22px; gap: 1px; padding: 2px 0; margin-left: 2px; }
.note { margin-left: 16px; width: 20px; padding-top: 15px; position: relative; }
.badge { position: absolute; left: 9px; top: 24px; width: 19px; height: 19px; border-radius: 50%; border: 1px solid #7b8a85; background: #2f3f3a; font-size: 15px; line-height: 19px; text-align: center; }
.peek { margin-left: 25px; border-left: 1px solid #7c8581; }
</style>
